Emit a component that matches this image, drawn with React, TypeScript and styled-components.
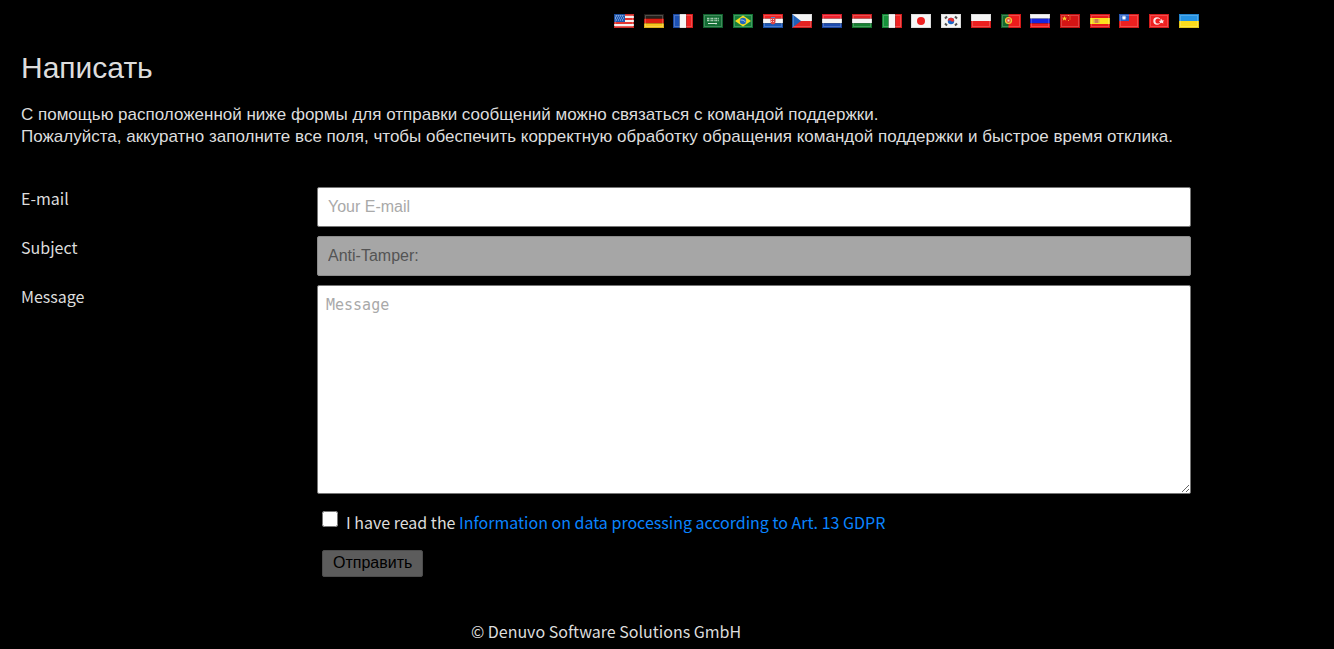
import React from "react";
import styled, { createGlobalStyle } from "styled-components";

const latin = `"Noto Sans CJK SC", "Noto Sans", sans-serif`;
const arial = `"Liberation Sans", Arial, sans-serif`;

const GlobalStyle = createGlobalStyle`
  *, *::before, *::after { box-sizing: border-box; }
  body {
    margin: 0;
    background: #000;
    color: #ddd;
    font-family: ${latin};
    font-size: 16px;
    line-height: 22px;
  }
`;

const Page = styled.div`
  max-width: 1200px;
  margin-left: 6px;
  padding: 14px 7px 7px 15px;
`;

const Languages = styled.nav`
  display: flex;
  justify-content: space-between;
  max-width: 585px;
  margin-left: auto;
`;

const LanguageLink = styled.a`
  display: block;
  width: 20px;
  height: 14px;
`;

const FlagImage = styled.svg`
  display: block;
  width: 100%;
  height: 100%;
`;

const Title = styled.h1`
  margin: 23px 0 19px;
  font: 400 30px/34px ${arial};
`;

const Intro = styled.p`
  margin: 0 0 39px;
  font: 400 17px/22px ${arial};
`;

const Form = styled.form`
  display: flex;
  flex-direction: column;
  gap: 9px;
  margin-right: 8px;
`;

const Field = styled.div`
  display: grid;
  grid-template-columns: 296px 1fr;
  align-items: start;
`;

const Label = styled.label``;

const TextInput = styled.input`
  width: 100%;
  height: 40px;
  padding: 0 10px;
  border: 1px solid #767676;
  border-radius: 2px;
  background: #fff;
  color: #222;
  font: 400 16px/20px ${arial};
  &::placeholder { color: #a9a9a9; }
  &:disabled {
    border-color: #8c8c8c;
    background: #a6a6a6;
    color: #545454;
  }
`;

const MessageBox = styled.textarea`
  display: block;
  width: 100%;
  height: 209px;
  padding: 8px;
  border: 1px solid #767676;
  border-radius: 2px;
  background: #fff;
  color: #222;
  font: 400 15px/22px "DejaVu Sans Mono", monospace;
  resize: both;
  &::placeholder { color: #a9a9a9; }
`;

const Actions = styled.div`
  display: flex;
  flex-direction: column;
  align-items: flex-start;
  gap: 17px;
  margin-left: 301px;
  padding-top: 8px;
`;

const Consent = styled.div`
  display: flex;
  align-items: flex-start;
  gap: 8px;
`;

const Checkbox = styled.input`
  width: 16px;
  height: 16px;
  margin: 0;
`;

const Link = styled.a`
  color: #0a84ff;
  text-decoration: none;
`;

const SubmitButton = styled.button`
  height: 27px;
  padding: 0 10px 2px;
  border: 1px solid #4c4c4c;
  border-radius: 2px;
  background: #5c5c5c;
  color: #000;
  font: 400 16px/20px ${arial};
`;

const Footer = styled.footer`
  margin-top: 43px;
  margin-right: 8px;
  text-align: center;
`;

const Bands = ({ colors }: { colors: string[] }) => (
  <>
    {colors.map((c, i) => (
      <rect key={i} y={(i * 14) / colors.length} width="20" height={14 / colors.length} fill={c} />
    ))}
  </>
);

const Columns = ({ colors }: { colors: string[] }) => (
  <>
    {colors.map((c, i) => (
      <rect key={i} x={(i * 20) / colors.length} width={20 / colors.length} height="14" fill={c} />
    ))}
  </>
);

const Ground = ({ fill }: { fill: string }) => <rect width="20" height="14" fill={fill} />;

const flags: { name: string; art: React.ReactNode }[] = [
  {
    name: "English",
    art: (
      <>
        <Bands colors={["#e3342f", "#f4eeee", "#e3342f", "#f4eeee", "#e3342f", "#f4eeee", "#e3342f"]} />
        <rect width="11" height="8" fill="#1d56b0" />
        <path d="M2 2h8M1 4h9M2 6h8" stroke="#a9c4ea" strokeDasharray="1 1" />
      </>
    ),
  },
  { name: "Deutsch", art: <Bands colors={["#25211c", "#dc1d10", "#f7c51c"]} /> },
  { name: "Français", art: <Columns colors={["#1c51b4", "#f4f4f4", "#ee2020"]} /> },
  {
    name: "العربية",
    art: (
      <>
        <Ground fill="#126c33" />
        <path d="M4 4.5h12M4 6.5h12" stroke="#a5cbb0" strokeWidth="1.3" strokeDasharray="2 .6 1 .5" />
        <path d="M5 9.5h9M13 8.8v1.6" stroke="#d5e7d9" />
      </>
    ),
  },
  {
    name: "Português (Brasil)",
    art: (
      <>
        <Ground fill="#15803a" />
        <path d="M10 1.5 18 7l-8 5.5L2 7z" fill="#f5dc22" />
        <circle cx="10" cy="7" r="3.2" fill="#2466bd" />
        <path d="M7.3 6q3-.5 5.3 2" fill="none" stroke="#bcd4ee" strokeWidth=".8" />
      </>
    ),
  },
  {
    name: "Hrvatski",
    art: (
      <>
        <Bands colors={["#f02323", "#f5f5f5", "#1b58b8"]} />
        <path d="M7.5 4h5v4q0 2-2.5 2.5Q7.5 10 7.5 8z" fill="#dc4544" />
        <path d="M8.5 5v4M10.5 5v4" stroke="#f5caca" strokeDasharray="1 1" />
        <path d="M8 3.5h4" stroke="#4989cf" />
      </>
    ),
  },
  {
    name: "Čeština",
    art: (
      <>
        <Bands colors={["#f3f3f3", "#e42222"]} />
        <path d="M0 0 9 7 0 14z" fill="#1e5fb6" />
      </>
    ),
  },
  { name: "Nederlands", art: <Bands colors={["#ef202c", "#f5f5f5", "#1c4bb0"]} /> },
  { name: "Magyar", art: <Bands colors={["#e32325", "#f5f5f5", "#168032"]} /> },
  { name: "Italiano", art: <Columns colors={["#15923a", "#f5f5f5", "#ee2222"]} /> },
  {
    name: "日本語",
    art: (
      <>
        <Ground fill="#f5f5f5" />
        <circle cx="10" cy="7" r="4" fill="#ed2020" />
      </>
    ),
  },
  {
    name: "한국어",
    art: (
      <>
        <Ground fill="#f4f4f4" />
        <circle cx="10" cy="7" r="3.2" fill="#1c65c8" />
        <path d="M6.8 7a3.2 3.2 0 0 1 6.4 0Q11 8.5 10 7T6.8 7" fill="#e63232" />
        <path d="M4 4.5 6 2.5M14 2.5l2 2M4 9.5l2 2M14 11.5l2-2" stroke="#505050" strokeWidth="2" />
      </>
    ),
  },
  { name: "Polski", art: <Bands colors={["#f4f4f4", "#ec2020"]} /> },
  {
    name: "Português",
    art: (
      <>
        <Ground fill="#ee1c1c" />
        <rect width="7.5" height="14" fill="#13692d" />
        <circle cx="7.5" cy="6.5" r="3" fill="#e54b35" stroke="#eed23c" strokeWidth="1.2" />
        <rect x="6.5" y="5.5" width="2" height="2" fill="#f5dede" />
      </>
    ),
  },
  { name: "Русский", art: <Bands colors={["#f5f5f5", "#1724dc", "#ee1c1c"]} /> },
  {
    name: "简体中文",
    art: (
      <>
        <Ground fill="#d41414" />
        <path d="m4.5 2 .8 1.700h1.900L5.700 4.800l.6 1.900-1.800-1.100-1.800 1.100.6-1.900-1.500-1.100h1.900z" fill="#f5cf2e" />
        <path d="M8 1.500h1M9.500 3h1M9.500 5h1M8 6.500h1" stroke="#f0a02c" />
      </>
    ),
  },
  {
    name: "Español",
    art: (
      <>
        <Ground fill="#e81a1a" />
        <rect y="4" width="20" height="6" fill="#fce01e" />
        <rect x="4.5" y="5" width="4" height="4" fill="#cf8050" />
        <path d="M4 5v4M9 5v4" stroke="#d9a96c" />
      </>
    ),
  },
  {
    name: "繁體中文",
    art: (
      <>
        <Ground fill="#ec2020" />
        <rect width="10" height="7" fill="#2b60c5" />
        <circle cx="5" cy="3.8" r="2.3" fill="#8fb0e5" />
        <circle cx="5" cy="3.8" r="1.4" fill="#fff" />
      </>
    ),
  },
  {
    name: "Türkçe",
    art: (
      <>
        <Ground fill="#ee2020" />
        <circle cx="8" cy="7" r="3.7" fill="#f8eaea" />
        <circle cx="9" cy="7" r="2.6" fill="#ee2020" />
        <path d="m10 7 2-.6.7-1.800.7 1.800 1.900.2-1.300 1.200.4 1.800-1.700-.9-1.200.5z" fill="#f8eaea" />
      </>
    ),
  },
  { name: "Українська", art: <Bands colors={["#2492e2", "#fbdc1c"]} /> },
];

const Flag = ({ art }: { art: React.ReactNode }) => (
  <FlagImage viewBox="0 0 20 14" aria-hidden="true">
    {art}
    <rect x="1.5" y="1.5" width="17" height="11" fill="none" stroke="#fff" strokeOpacity=".2" />
    <rect x=".5" y=".5" width="19" height="13" fill="none" stroke="#000" strokeOpacity=".1" />
  </FlagImage>
);

export default function App() {
  return (
    <>
      <GlobalStyle />
      <Page>
        <Languages aria-label="Language">
          {flags.map(({ name, art }) => (
            <LanguageLink key={name} href="#" aria-label={name}>
              <Flag art={art} />
            </LanguageLink>
          ))}
        </Languages>
        <main>
          <Title>Написать</Title>
          <Intro>
            С помощью расположенной ниже формы для отправки сообщений можно связаться с командой поддержки.
            <br />
            Пожалуйста, аккуратно заполните все поля, чтобы обеспечить корректную обработку обращения командой
            поддержки и быстрое время отклика.
          </Intro>
          <Form onSubmit={(e) => e.preventDefault()}>
            <Field>
              <Label htmlFor="email">E-mail</Label>
              <TextInput id="email" type="email" placeholder="Your E-mail" />
            </Field>
            <Field>
              <Label htmlFor="subject">Subject</Label>
              <TextInput id="subject" type="text" defaultValue="Anti-Tamper:" disabled />
            </Field>
            <Field>
              <Label htmlFor="message">Message</Label>
              <MessageBox id="message" placeholder="Message" />
            </Field>
            <Actions>
              <Consent>
                <Checkbox id="consent" type="checkbox" />
                <Label htmlFor="consent">
                  I have read the <Link href="#">Information on data processing according to Art. 13 GDPR</Link>
                </Label>
              </Consent>
              <SubmitButton type="submit" disabled>
                Отправить
              </SubmitButton>
            </Actions>
          </Form>
        </main>
        <Footer>© Denuvo Software Solutions GmbH</Footer>
      </Page>
    </>
  );
}
